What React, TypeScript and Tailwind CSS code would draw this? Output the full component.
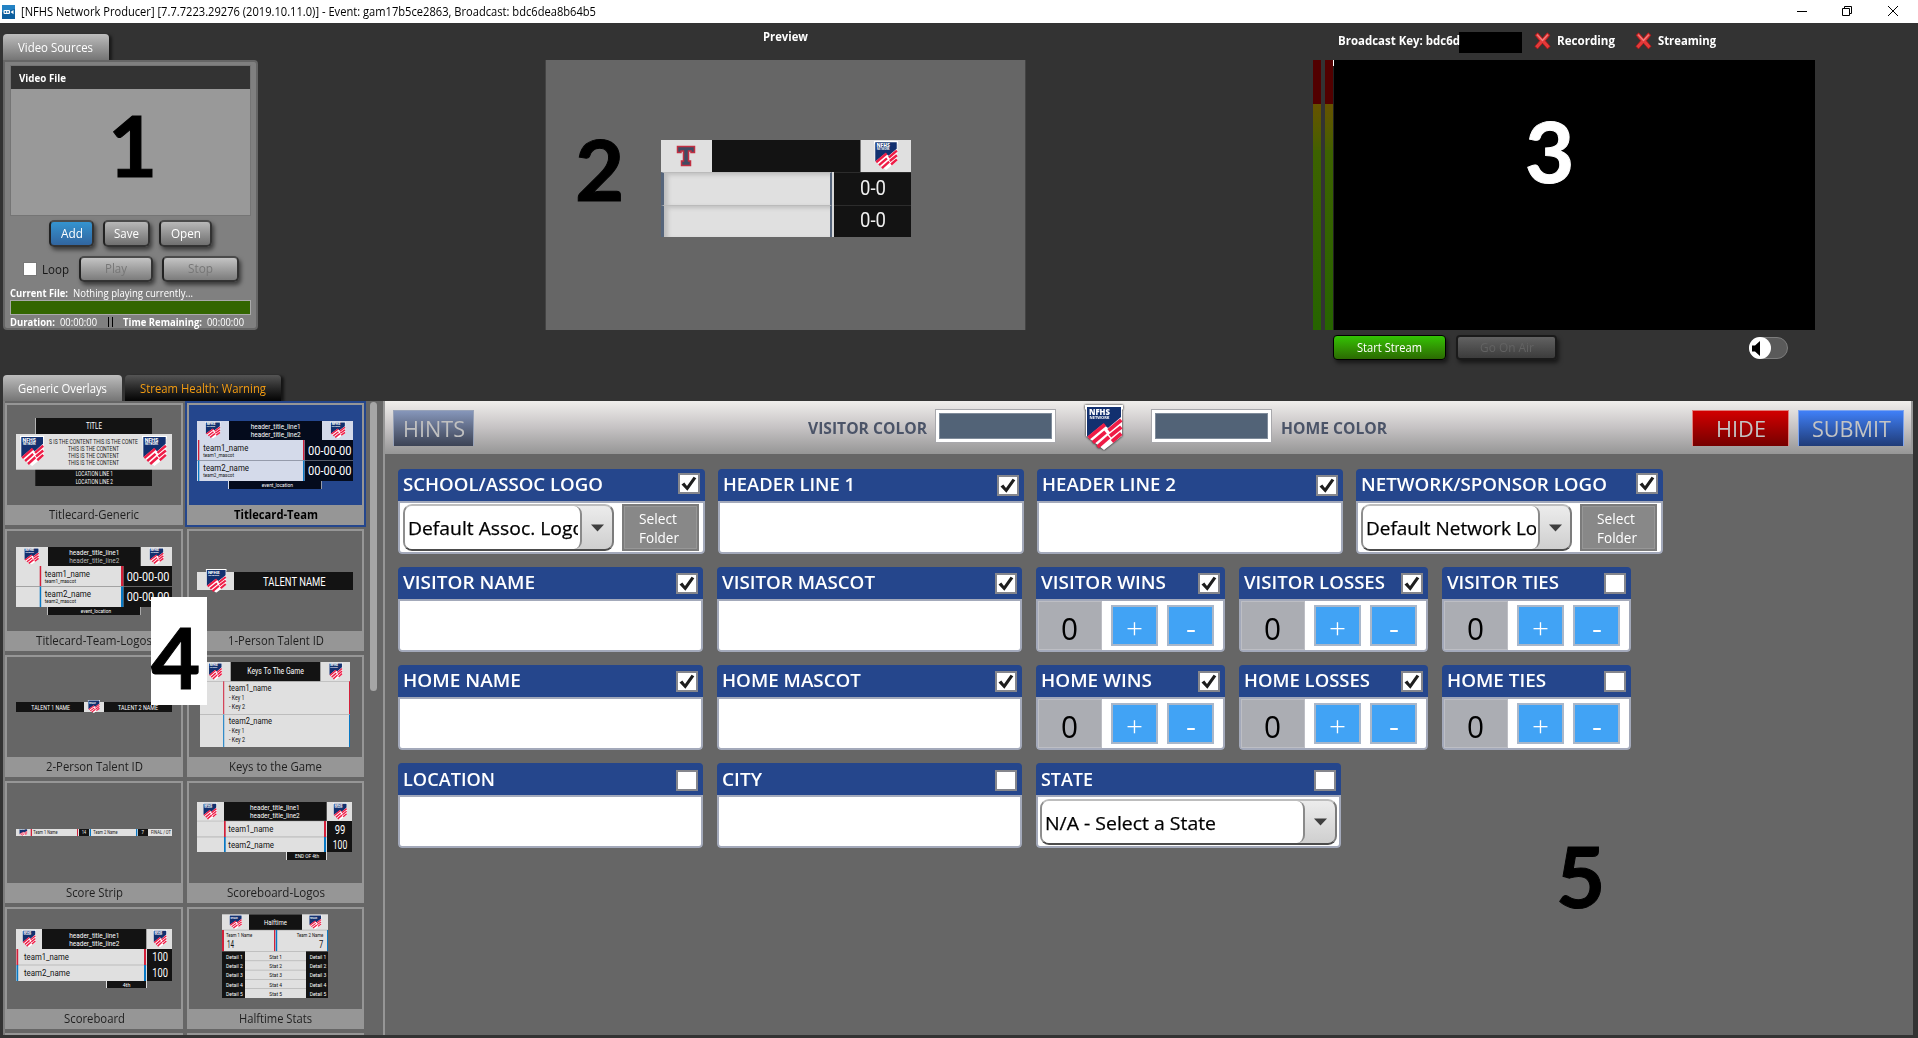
import { useLayoutEffect, useRef, useState, type ReactNode } from "react";

/* Text squeezed or stretched horizontally so it fills a known width. */
function Fit({ w, className = "", children }: { w: number; className?: string; children: ReactNode }) {
  const ref = useRef<HTMLSpanElement>(null);
  const [scale, setScale] = useState(1);
  useLayoutEffect(() => {
    if (ref.current && ref.current.offsetWidth) {
      const range = document.createRange();
      range.selectNodeContents(ref.current);
      ref.current.style.transform = "none";
      const natural = range.getBoundingClientRect().width;
      ref.current.style.transform = `scaleX(${w / natural})`;
      setScale(w / natural);
    }
  }, [w]);
  return (
    <span className={`block shrink-0 whitespace-pre ${className}`} style={{ width: w }}>
      <span ref={ref} className="inline-block origin-left" style={{ transform: `scaleX(${scale})` }}>
        {children}
      </span>
    </span>
  );
}

function ShieldShape() {
  return (
    <>
      <path d="M0 0H38V4L37 5V31L19 45L1 31V5L0 4Z" fill="#fff" />
      <path d="M2 2H36V12L23 23L18 19L2 32Z" fill="#12306f" />
      <g stroke="#ee1c46" strokeWidth="3.8">
        <path d="M3.500 33L20 19.500" />
        <path d="M8 37.500L20.500 27" />
        <path d="M12.500 42L24 32" />
        <path d="M23.500 25.500L36.300 15" />
        <path d="M25 31L36.300 22" />
        <path d="M27 36.500L36.300 28.500" />
      </g>
      <text x="4" y="9.500" fontSize="8" fontWeight="800" fill="#fff" textLength="21" lengthAdjust="spacingAndGlyphs">NFHS</text>
      <text x="4.500" y="14" fontSize="4" fontWeight="700" fill="#fff" textLength="20" lengthAdjust="spacingAndGlyphs">NETWORK</text>
    </>
  );
}

function Shield({ className }: { className: string }) {
  return (
    <svg className={className} viewBox="0 0 38 45" preserveAspectRatio="none">
      <ShieldShape />
    </svg>
  );
}

/* ---- drawing helpers for the overlay thumbnails ---- */
const INK = "#131313";
const PAPER = "#e0e0e0";
const RED = "#d2203a";
const BLUE = "#0878c4";

function R({ x, y, x2, y2, f }: { x: number; y: number; x2: number; y2: number; f: string }) {
  return <rect x={x} y={y} width={x2 - x} height={y2 - y} fill={f} />;
}
function L({ x, x2, y, s, f = "#fff", children }: { x: number; x2: number; y: number; s: number; f?: string; children: string }) {
  return (
    <text x={x} y={y + s * 0.36} fontSize={s} fill={f} textLength={x2 - x} lengthAdjust="spacingAndGlyphs">
      {children}
    </text>
  );
}
function S({ x, y, x2, y2 }: { x: number; y: number; x2: number; y2: number }) {
  return (
    <svg x={x} y={y} width={x2 - x} height={y2 - y} viewBox="0 0 38 45" preserveAspectRatio="none">
      <ShieldShape />
    </svg>
  );
}
function Thumb({ children }: { children: ReactNode }) {
  return (
    <svg className="block h-[100px] w-[174px] max-w-none font-['Roboto',sans-serif]" viewBox="0 0 174 100">
      {children}
    </svg>
  );
}

const TitleGeneric = () => (
  <Thumb>
    <R x={28.3} y={13} x2={145} y2={81} f={INK} />
    <R x={28} y={13} x2={28.700} y2={29} f="#eee" />
    <R x={9} y={29} x2={165} y2={64.7} f={PAPER} />
    <L x={79} x2={95} y={21} s={8.5}>TITLE</L>
    <L x={42} x2={131} y={36.3} s={6.5} f="#222">S IS THE CONTENT THIS IS THE CONTE</L>
    <L x={61} x2={112} y={43.7} s={6.5} f="#222">THIS IS THE CONTENT</L>
    <L x={61} x2={112} y={50.7} s={6.5} f="#222">THIS IS THE CONTENT</L>
    <L x={61} x2={112} y={57.7} s={6.5} f="#222">THIS IS THE CONTENT</L>
    <L x={68.7} x2={106} y={69} s={6.5}>LOCATION LINE 1</L>
    <L x={68.7} x2={106} y={76.7} s={6.5}>LOCATION LINE 2</L>
    <S x={13} y={30.700} x2={37.3} y2={61} />
    <S x={135} y={30.7} x2={160} y2={61} />
  </Thumb>
);

const TitleTeam = () => {
  const k = "#040b1c";
  const p = "#d4daea";
  return (
    <Thumb>
      <R x={8} y={16} x2={164} y2={35} f={p} />
      <R x={40} y={16} x2={133} y2={35} f={k} />
      <R x={8} y={35} x2={115.7} y2={76} f={p} />
      <R x={115.7} y={35} x2={164} y2={76} f={k} />
      <R x={8} y={55} x2={164} y2={55.700} f="#7a8090" />
      <R x={9} y={35} x2={10.3} y2={55} f={RED} />
      <R x={114} y={35} x2={115.300} y2={55} f={RED} />
      <R x={9} y={55.5} x2={10.3} y2={76} f={BLUE} />
      <R x={114} y={55.5} x2={115.3} y2={76} f={BLUE} />
      <R x={39.5} y={76} x2={133} y2={84} f={k} />
      <R x={39} y={76} x2={40} y2={84} f={p} />
      <R x={132.300} y={76} x2={133} y2={84} f={p} />
      <L x={61.7} x2={111.7} y={21.3} s={8}>header_title_line1</L>
      <L x={61.7} x2={111.7} y={29} s={8}>header_title_line2</L>
      <L x={14.3} x2={59.3} y={42.5} s={9.5} f="#111">team1_name</L>
      <L x={14.3} x2={45} y={50.3} s={5.5} f="#111">team1_mascot</L>
      <L x={14.3} x2={60} y={62.7} s={9.5} f="#111">team2_name</L>
      <L x={14.3} x2={45} y={70.3} s={5.5} f="#111">team2_mascot</L>
      <L x={119} x2={162.5} y={45} s={12.5}>00-00-00</L>
      <L x={119} x2={162.5} y={65.3} s={12.5}>00-00-00</L>
      <L x={72.7} x2={104} y={80.3} s={5.5}>event_location</L>
      <S x={16} y={16.7} x2={31.7} y2={33.5} />
      <S x={141} y={16.7} x2={156.7} y2={33.5} />
    </Thumb>
  );
};

const TitleTeamLogos = () => (
  <Thumb>
    <R x={9} y={16} x2={165} y2={35} f={PAPER} />
    <R x={41} y={16} x2={133.7} y2={35} f={INK} />
    <R x={9} y={35} x2={116.5} y2={76} f={PAPER} />
    <R x={116.5} y={35} x2={165} y2={76} f={INK} />
    <R x={9} y={55} x2={165} y2={55.7} f="#888" />
    <R x={32.700} y={35} x2={34.2} y2={55} f={RED} />
    <R x={114} y={35} x2={116.3} y2={55} f={RED} />
    <R x={32.7} y={55.5} x2={34.2} y2={76} f={BLUE} />
    <R x={114} y={55.5} x2={116.3} y2={76} f={BLUE} />
    <R x={40.3} y={76} x2={133.7} y2={84} f={INK} />
    <R x={40} y={76} x2={40.8} y2={84} f={PAPER} />
    <R x={133} y={76} x2={133.7} y2={84} f={PAPER} />
    <L x={62.3} x2={112.3} y={21.3} s={8}>header_title_line1</L>
    <L x={62.3} x2={112.3} y={29} s={8} f="#bbb">header_title_line2</L>
    <L x={37.7} x2={83} y={42.5} s={9.5} f="#111">team1_name</L>
    <L x={37.7} x2={69} y={50.3} s={5.5} f="#111">team1_mascot</L>
    <L x={37.7} x2={84} y={62.7} s={9.5} f="#111">team2_name</L>
    <L x={37.7} x2={69} y={70.3} s={5.5} f="#111">team2_mascot</L>
    <L x={119.7} x2={162.5} y={45} s={12.5}>00-00-00</L>
    <L x={119.7} x2={162.5} y={65.3} s={12.5}>00-00-00</L>
    <L x={73.7} x2={104} y={80.3} s={5.5}>event_location</L>
    <S x={16.7} y={16.7} x2={32.3} y2={33.5} />
    <S x={142} y={16.7} x2={157} y2={33.5} />
  </Thumb>
);

const TalentOne = () => (
  <Thumb>
    <R x={8} y={41} x2={45} y2={59} f={PAPER} />
    <R x={45} y={41} x2={164} y2={59} f={INK} />
    <S x={16.7} y={38} x2={37.7} y2={61.7} />
    <L x={74} x2={136.7} y={50.5} s={12.5}>TALENT NAME</L>
  </Thumb>
);

const TalentTwo = () => (
  <Thumb>
    <R x={9} y={45} x2={165} y2={55} f={INK} />
    <R x={77} y={45} x2={97} y2={55} f={PAPER} />
    <S x={80.7} y={43} x2={93} y2={56} />
    <L x={24.3} x2={63} y={50.300} s={7}>TALENT 1 NAME</L>
    <L x={111} x2={151} y={50.3} s={7}>TALENT 2 NAME</L>
  </Thumb>
);

const Keys = () => (
  <Thumb>
    <R x={11} y={5} x2={161} y2={90} f={PAPER} />
    <R x={41.7} y={5} x2={131.3} y2={24.3} f={INK} />
    <R x={11} y={24} x2={161} y2={24.7} f="#b5b5b5" />
    <R x={11} y={57} x2={161} y2={57.800} f="#b5b5b5" />
    <R x={34.200} y={24.300} x2={35.2} y2={57} f={RED} />
    <R x={160} y={24.3} x2={161} y2={57} f={RED} />
    <R x={34.2} y={57.6} x2={35.2} y2={90} f={BLUE} />
    <R x={160} y={57.6} x2={161} y2={90} f={BLUE} />
    <L x={58.3} x2={115} y={14} s={9}>Keys To The Game</L>
    <L x={39.7} x2={82.3} y={30.700} s={9} f="#111">team1_name</L>
    <L x={40} x2={55.3} y={40.7} s={6.5} f="#111">- Key 1</L>
    <L x={40} x2={56} y={50} s={6.5} f="#111">- Key 2</L>
    <L x={39.7} x2={83} y={63.7} s={9} f="#111">team2_name</L>
    <L x={40} x2={55.3} y={74} s={6.5} f="#111">- Key 1</L>
    <L x={40} x2={56} y={82.7} s={6.5} f="#111">- Key 2</L>
    <S x={19.3} y={5.7} x2={33.3} y2={23} />
    <S x={139.7} y={5.7} x2={153.7} y2={23} />
  </Thumb>
);

const ScoreStrip = () => (
  <Thumb>
    <R x={9} y={46} x2={165} y2={53} f={PAPER} />
    <S x={12} y={46} x2={20.7} y2={53} />
    <R x={23.700} y={46} x2={25} y2={53} f={RED} />
    <R x={70} y={46} x2={71} y2={53} f={RED} />
    <R x={72} y={46} x2={82} y2={53} f={INK} />
    <R x={82.700} y={46} x2={84} y2={53} f={BLUE} />
    <R x={129} y={46} x2={130.3} y2={53} f={BLUE} />
    <R x={131} y={46} x2={141} y2={53} f={INK} />
    <L x={26.3} x2={50.5} y={49.5} s={5} f="#222">Team 1 Name</L>
    <L x={75} x2={79} y={49.5} s={5.5}>14</L>
    <L x={86.3} x2={110.5} y={49.5} s={5} f="#222">Team 2 Name</L>
    <L x={134.500} x2={137} y={49.5} s={5.5}>7</L>
    <L x={144} x2={164} y={49.5} s={5} f="#222">FINAL / OT</L>
  </Thumb>
);

const ScoreLogos = () => (
  <Thumb>
    <R x={8} y={19} x2={163} y2={69} f={PAPER} />
    <R x={35} y={19} x2={137.7} y2={38} f={INK} />
    <R x={138} y={38} x2={163} y2={69} f={INK} />
    <R x={8} y={37.8} x2={137.7} y2={38.3} f="#aaa" />
    <R x={8} y={53.600} x2={138} y2={54.3} f="#a5a5a5" />
    <R x={35} y={38} x2={36.7} y2={54} f={RED} />
    <R x={135} y={38} x2={137} y2={54} f={RED} />
    <R x={35} y={54} x2={36.7} y2={69} f={BLUE} />
    <R x={135} y={54} x2={137} y2={69} f={BLUE} />
    <R x={97.3} y={69} x2={138} y2={77} f={INK} />
    <R x={97} y={69} x2={98} y2={77} f={PAPER} />
    <R x={137} y={69} x2={138} y2={77} f={PAPER} />
    <L x={61} x2={110.7} y={24.3} s={8}>header_title_line1</L>
    <L x={61} x2={110.7} y={32} s={8}>header_title_line2</L>
    <L x={39.3} x2={84.3} y={46} s={9.5} f="#111">team1_name</L>
    <L x={39.3} x2={85} y={61.700} s={9.5} f="#111">team2_name</L>
    <L x={145.7} x2={156.3} y={46.3} s={12}>99</L>
    <L x={143.7} x2={158.3} y={61.700} s={12}>100</L>
    <L x={106} x2={130} y={73.3} s={6}>END OF 4th</L>
    <S x={13.7} y={20} x2={28} y2={37} />
    <S x={144} y={20} x2={158.3} y2={37} />
  </Thumb>
);

const Score = () => (
  <Thumb>
    <R x={9} y={20} x2={165} y2={72} f={PAPER} />
    <R x={35} y={20} x2={139.3} y2={40} f={INK} />
    <R x={140} y={40} x2={165} y2={72} f={INK} />
    <R x={9} y={55.700} x2={140} y2={56.3} f="#a5a5a5" />
    <R x={9.500} y={40} x2={11.2} y2={56} f={RED} />
    <R x={137} y={40} x2={139} y2={56} f={RED} />
    <R x={9.5} y={56} x2={11.2} y2={72} f={BLUE} />
    <R x={137} y={56} x2={139} y2={72} f={BLUE} />
    <R x={99} y={72} x2={139.7} y2={79} f={INK} />
    <R x={99} y={72} x2={100} y2={79} f={PAPER} />
    <R x={139} y={72} x2={140} y2={79} f={PAPER} />
    <L x={62.3} x2={112.3} y={26} s={8}>header_title_line1</L>
    <L x={62.3} x2={112.3} y={34} s={8}>header_title_line2</L>
    <L x={17} x2={62} y={48} s={9.5} f="#111">team1_name</L>
    <L x={17} x2={63} y={64} s={9.5} f="#111">team2_name</L>
    <L x={145.3} x2={161} y={48} s={12}>100</L>
    <L x={145.3} x2={161} y={64} s={12}>100</L>
    <L x={115.7} x2={123.3} y={75.7} s={5.5}>4th</L>
    <S x={15} y={21} x2={29} y2={38.3} />
    <S x={146} y={21} x2={160} y2={38.3} />
  </Thumb>
);

const Halftime = () => (
  <Thumb>
    <R x={33} y={5.3} x2={139} y2={89} f={PAPER} />
    <R x={60} y={5.3} x2={113} y2={21} f={INK} />
    <R x={33} y={20.800} x2={139} y2={21.3} f="#999" />
    <R x={33} y={21} x2={35} y2={42.300} f={RED} />
    <R x={85} y={21} x2={86.3} y2={42.3} f={RED} />
    <R x={86.800} y={21} x2={88.200} y2={42.3} f={BLUE} />
    <R x={138} y={21} x2={139} y2={42.3} f={BLUE} />
    <R x={33} y={42.3} x2={56} y2={89} f={INK} />
    <R x={117} y={42.3} x2={139} y2={89} f={INK} />
    <L x={75} x2={98} y={12.7} s={8}>Halftime</L>
    <L x={37} x2={63.3} y={26.3} s={5.5} f="#111">Team 1 Name</L>
    <L x={38} x2={45} y={35.2} s={10} f="#111">14</L>
    <L x={107.7} x2={134.3} y={26.3} s={5.5} f="#111">Team 2 Name</L>
    <L x={130} x2={134.3} y={35.2} s={10} f="#111">7</L>
    {[1, 2, 3, 4, 5].map((n) => (
      <g key={n}>
        <R x={56} y={32.9 + n * 9.3} x2={117} y2={33.5 + n * 9.3} f="#aaa" />
        <L x={37} x2={53.7} y={38.2 + n * 9.3} s={6}>{`Detail ${n}`}</L>
        <L x={80.3} x2={93} y={38.2 + n * 9.3} s={6} f="#111">{`Stat ${n}`}</L>
        <L x={120.7} x2={137.3} y={38.2 + n * 9.3} s={6}>{`Detail ${n}`}</L>
      </g>
    ))}
    <S x={40} y={6} x2={53.3} y2={20} />
    <S x={119.7} y={6} x2={132.7} y2={20} />
  </Thumb>
);

function Card({ label, w, active = false, children }: { label: string; w: number; active?: boolean; children: ReactNode }) {
  return (
    <div
      className={`flex h-[122px] w-full flex-col border-2 border-[#969696] bg-[#969696] ${
        active ? "outline-2 outline-[#24468d]" : ""
      }`}
    >
      <div className={`h-[100px] shrink-0 overflow-hidden ${active ? "bg-[#24468d]" : "bg-[#666]"}`}>{children}</div>
      <div className="flex justify-center pt-px">
        <Fit w={w} className={`text-[12.500px] leading-[18px] ${active ? "font-bold text-black" : "text-[#1f1f1f]"}`}>
          {label}
        </Fit>
      </div>
    </div>
  );
}

/* ---- form pieces ---- */
function Check({ on, className = "" }: { on: boolean; className?: string }) {
  return (
    <span className={`flex h-[21px] w-[22px] items-center justify-center border-2 border-[#85868c] bg-white ${className}`}>
      {on && (
        <svg className="h-[17px] w-[18px]" viewBox="0 0 18 17" fill="none">
          <path d="M1.500 9.500L4.300 7.500L7 11L13.600 1.800L16.300 3.300L7.400 15.800Z" fill="#1e1e1e" />
        </svg>
      )}
    </span>
  );
}

type FieldProps = { label: string; tw: number; on: boolean; size: string; high?: boolean; low?: boolean; children?: ReactNode };

function Field({ label, tw, on, size, high, low, children }: FieldProps) {
  return (
    <div className={`flex h-[85px] shrink-0 flex-col overflow-hidden rounded-[4px] ${size}`}>
      <div className="flex h-[32px] items-start justify-between bg-[#25468c] pl-[5px] pr-[5px]">
        <Fit w={tw} className={`text-[18px] font-semibold leading-[26px] text-white ${low ? "pt-[3px]" : "pt-[2px]"}`}>{label}</Fit>
        <Check on={on} className={high ? "mt-[4px]" : low ? "mt-[7px]" : "mt-[6px]"} />
      </div>
      <div className="flex h-[53px] items-start rounded-b-[4px] border-2 border-[#a3a9ba] bg-white">{children}</div>
    </div>
  );
}

function Combo({ text, tw, box, inner }: { text: string; tw: number; box: string; inner: string }) {
  return (
    <div
      className={`flex shrink-0 items-stretch overflow-hidden rounded-[9px] border-2 border-t-[#bdbdbd] border-r-[#7c7c7c] border-b-[#4c4c4c] border-l-[#8e8e8e] bg-gradient-to-b from-[#ececec] to-[#cfcfcf] ${box}`}
    >
      <div className={`flex items-center overflow-hidden rounded-r-[8px] border-r-2 border-[#8a8a8a] bg-white pl-[3px] pt-px ${inner}`}>
        <div className="overflow-hidden">
          <Fit w={tw} className="text-[18.500px] font-medium leading-[28px] text-black [-webkit-text-stroke:0.25px_#000]">{text}</Fit>
        </div>
      </div>
      <div className="flex flex-1 items-center justify-center">
        <svg className="h-[8px] w-[13px]" viewBox="0 0 13 8"><path d="M0 0.500H13L6.500 7.500Z" fill="#3f3f3f" /></svg>
      </div>
    </div>
  );
}

function LogoPicker({ text, tw }: { text: string; tw: number }) {
  return (
    <div className="flex pl-[3px] pt-px">
      <Combo text={text} tw={tw} box="h-[47px] w-[211px]" inner="w-[177px] pr-[2px]" />
      <div className="ml-[8px] flex h-[47px] w-[77px] flex-col items-start justify-center border-2 border-[#7b7b7b] bg-[#888] pl-[15px] pt-px text-[14px] leading-[19px] text-white outline-1 -outline-offset-3 outline-[#979797]">
        <Fit w={38}>Select</Fit>
        <Fit w={40}>Folder</Fit>
      </div>
    </div>
  );
}

function Counter() {
  return (
    <div className="flex items-center">
      <div className="flex h-[49px] w-[64px] items-center justify-center border border-[#bdbec4] bg-[#abadb3] pr-px pt-[5px]">
        <Fit w={17} className="text-[31px] leading-[40px] text-black">0</Fit>
      </div>
      <div className="ml-[9px] flex h-[41px] w-[47px] items-center justify-center border-2 border-[#a9b7ca] bg-[#41a3f5] pt-[4px] text-[27px] font-light leading-none text-white">
        <Fit w={17}>+</Fit>
      </div>
      <div className="ml-[9px] flex h-[41px] w-[47px] items-center justify-center border-2 border-[#a9b7ca] bg-[#41a3f5] pt-[4px] text-[27px] leading-none text-white">
        <Fit w={10}>-</Fit>
      </div>
    </div>
  );
}

function GrayButton({ label, w, size, tone }: { label: string; w: number; size: string; tone: string }) {
  return (
    <button
      className={`flex items-center justify-center rounded-[5px] border-2 border-t-[#4b4b4b] border-r-[#333] border-b-[#333] border-l-[#222] bg-gradient-to-b shadow-[2px_3px_4px_rgba(0,0,0,0.55)] ${size} ${tone}`}
    >
      <Fit w={w} className="text-[12.500px] leading-[18px]">{label}</Fit>
    </button>
  );
}

function StatusX() {
  return (
    <svg className="h-[18px] w-[17px]" viewBox="0 0 16 17">
      <path d="M1 3L3.500 0.800L8 6L12.500 0.800L15 3L10.700 8.300L15.200 13.500L12.700 16L8 10.600L3.300 16L0.800 13.500L5.300 8.300Z" fill="#e23a3a" stroke="#a81818" strokeWidth="0.8" />
      <path d="M3 2.500L8 8L13 2.500" fill="none" stroke="#f28080" strokeWidth="1.200" />
    </svg>
  );
}

function Meter() {
  return (
    <div className="flex h-[270px] w-[8px] flex-col">
      <div className="h-[44px] bg-[#520000]" />
      <div className="h-[46px] bg-gradient-to-b from-[#665200] to-[#446000]" />
      <div className="flex-1 bg-gradient-to-b from-[#3d6200] to-[#266400]" />
    </div>
  );
}

function TitleBar() {
  return (
    <header className="flex h-[23px] shrink-0 items-center bg-white">
      <svg className="ml-[2px] h-[14px] w-[13px]" viewBox="0 0 13 14">
        <rect width="13" height="14" fill="#0d5f9e" />
        <path d="M0 0H13V4L0 7Z" fill="#2382c4" />
        <rect x="1.500" y="5" width="6.500" height="4" rx="1" fill="#fff" />
        <path d="M8.500 7L11.500 5V9.300Z" fill="#fff" />
        <circle cx="3.400" cy="7" r="0.900" fill="#0d5f9e" />
        <circle cx="6" cy="7" r="0.900" fill="#0d5f9e" />
      </svg>
      <Fit w={575} className="ml-[6px] text-[12px] leading-[20px] text-black">
        [NFHS Network Producer] [7.7.7223.29276 (2019.10.11.0)] - Event: gam17b5ce2863, Broadcast: bdc6dea8b64b5
      </Fit>
      <svg className="ml-auto mr-[19px] h-[12px] w-[103px] -translate-y-px" viewBox="0 0 103 12" fill="none" stroke="#000">
        <path d="M1 6.500H11" />
        <path d="M46.500 3.500H53.500V10.500H46.500ZM48.500 3.500V1.500H55.500V8.500H53.500" />
        <path d="M92 1L102 11M102 1L92 11" />
      </svg>
    </header>
  );
}

function VideoSources() {
  return (
    <div className="ml-[3px] mt-[11px] w-[255px]">
      <div className="flex h-[26px] w-[106px] items-center justify-center rounded-t-[4px] bg-gradient-to-b from-[#bdbdbd] to-[#757575] pt-[2px] pr-px shadow-[3px_1px_3px_rgba(0,0,0,0.5)]">
        <Fit w={75} className="text-[12.500px] leading-[20px] text-white">Video Sources</Fit>
      </div>
      <div className="h-[270px] w-[255px] rounded-[4px] rounded-tl-none border-2 border-[#666] bg-[#808080] pl-[5px] pt-[3px]">
        <div className="w-[241px] border border-[#757575]">
          <div className="flex h-[23px] items-center bg-[#333] pl-[8px]">
            <Fit w={47} className="text-[11px] font-bold leading-[18px] text-white">Video File</Fit>
          </div>
          <div className="h-[126px] bg-[#999]" />
        </div>
        <div className="mt-[4px] flex gap-[9px] pl-[39px]">
          <GrayButton label="Add" w={22} size="h-[27px] w-[45px]" tone="from-[#3494d0] to-[#31659f] text-white" />
          <GrayButton label="Save" w={25} size="h-[27px] w-[47px]" tone="from-[#b8b8b8] to-[#707070] text-white" />
          <GrayButton label="Open" w={30} size="h-[27px] w-[53px]" tone="from-[#b8b8b8] to-[#707070] text-white" />
        </div>
        <div className="mt-[9px] flex items-center pl-[13px]">
          <span className="h-[14px] w-[14px] border border-[#777] bg-white" />
          <Fit w={27} className="ml-[5px] text-[13px] leading-[18px] text-[#161616]">Loop</Fit>
          <GrayButton label="Play" w={22} size="ml-[10px] h-[26px] w-[74px]" tone="from-[#c4c4c4] to-[#7c7c7c] text-[#777]" />
          <GrayButton label="Stop" w={25} size="ml-[9px] h-[26px] w-[77px]" tone="from-[#c4c4c4] to-[#7c7c7c] text-[#777]" />
        </div>
        <div className="mt-[4px] flex h-[14px] items-center text-[11px] leading-[14px] text-white">
          <Fit w={58} className="font-bold">Current File:</Fit>
          <Fit w={120} className="ml-[5px]">Nothing playing currently...</Fit>
        </div>
        <div className="h-[15px] w-[241px] border border-[#aaa] bg-[#336600]" />
        <div className="flex h-[14px] items-center text-[11px] leading-[14px] text-white">
          <Fit w={45} className="font-bold">Duration:</Fit>
          <Fit w={37} className="ml-[5px]">00:00:00</Fit>
          <span className="ml-[11px] h-[10px] w-[5px] border-x border-black" />
          <Fit w={79} className="ml-[10px] font-bold">Time Remaining:</Fit>
          <Fit w={37} className="ml-[5px]">00:00:00</Fit>
        </div>
      </div>
    </div>
  );
}

function PreviewBoard() {
  return (
    <div className="flex h-[97px] w-[250px] flex-col bg-[#131313]">
      <div className="flex h-[32px] justify-between">
        <div className="flex w-[51px] items-center justify-center bg-[#e0e0e0] pr-px">
          <svg className="h-[22px] w-[20px]" viewBox="0 0 20 22">
            <path d="M1.500 1.500H18.500V7.500H15V6H12.500V16H14.500V20.500H5.500V16H7.500V6H5V7.500H1.500Z" fill="#414c63" stroke="#c12f42" strokeWidth="1.500" />
          </svg>
        </div>
        <div className="flex w-[51px] justify-center border-l border-[#777] bg-[#e0e0e0] pt-px">
          <Shield className="h-[29px] w-[24px]" />
        </div>
      </div>
      {[0, 1].map((n) => (
        <div key={n} className="flex h-[32.500px]">
          <div className="w-[171px] border-r-2 border-l-[3px] border-t border-[#56657b] border-t-[#bbb] bg-[#e0e0e0] shadow-[inset_4px_2px_4px_rgba(0,0,0,0.15)]" />
          <div className="w-[2px] bg-[#d8d8d8]" />
          <div className="flex flex-1 items-center justify-center border-t border-[#2c2c2c] bg-[#131313] pl-px">
            <Fit w={26} className="-mt-[2px] font-['Roboto',sans-serif] text-[20.500px] leading-[24px] text-[#f0f0f0]">0-0</Fit>
          </div>
        </div>
      ))}
    </div>
  );
}

function Monitor() {
  return (
    <section className="mt-[9px] w-[605px]">
      <div className="flex h-[21px] items-center pl-[25px] text-[12px] font-bold leading-[18px] text-white">
        <Fit w={122} className="-mt-[3px]">Broadcast Key: bdc6d</Fit>
        <span className="-ml-px h-[21px] w-[63px] bg-black" />
        <span className="ml-[12px] -mt-1"><StatusX /></span>
        <Fit w={58} className="ml-[6px] -mt-[3px]">Recording</Fit>
        <span className="ml-[20px] -mt-1"><StatusX /></span>
        <Fit w={58} className="ml-[6px] -mt-[3px]">Streaming</Fit>
      </div>
      <div className="mt-[7px] flex">
        <Meter />
        <span className="w-[4px]" />
        <Meter />
        <div className="h-[270px] w-[482px] border-l border-[#222] bg-black">
          <div className="-ml-px h-[6px] w-px bg-white" />
        </div>
      </div>
      <div className="mt-[5px] flex pl-[20px]">
        <button className="flex h-[25px] w-[113px] items-center justify-center rounded-[4px] border border-black bg-gradient-to-b from-[#33c404] to-[#2b6a02] shadow-[2px_3px_4px_rgba(0,0,0,0.55)]">
          <Fit w={65} className="text-[12px] leading-[18px] text-white">Start Stream</Fit>
        </button>
        <button className="ml-[10px] flex h-[25px] w-[101px] items-center justify-center rounded-[4px] border-2 border-[#1a1a1a] bg-gradient-to-b from-[#626262] to-[#3c3c3c] shadow-[2px_3px_4px_rgba(0,0,0,0.55)]">
          <Fit w={54} className="text-[12.500px] leading-[18px] text-[#626262]">Go On Air</Fit>
        </button>
        <div className="ml-[192px] mt-[2px] flex h-[22px] w-[39px] rounded-full border border-[#7d7d7d] bg-[#5a5a5a]">
          <span className="-ml-px -mt-px flex h-[22px] w-[22px] items-center rounded-full bg-white pl-[3px]">
            <svg className="h-[15px] w-[8px]" viewBox="0 0 8 15"><path d="M0 4.500H3L8 0V15L3 10.500H0Z" fill="#000" /></svg>
          </span>
        </div>
      </div>
    </section>
  );
}

function ColorBox() {
  return (
    <div className="h-[34px] w-[121px] border border-[#a8a8ac] bg-white p-[3px]">
      <div className="h-full border border-[#7f8b9a] bg-[#526377]" />
    </div>
  );
}

function Callout({ n, place, tone = "text-black" }: { n: string; place: string; tone?: string }) {
  return (
    <span
      className={`pointer-events-none absolute font-['Lato',sans-serif] text-[85px] font-bold leading-[104px] [-webkit-text-stroke:1px_currentColor] ${place} ${tone}`}
    >
      {n}
    </span>
  );
}

export default function App() {
  return (
    <div className="relative flex h-[1038px] w-[1918px] flex-col overflow-hidden bg-[#333] font-['Open_Sans',sans-serif]">
      <TitleBar />
      <div className="flex h-[378px] shrink-0">
        <div className="flex w-[545px] flex-col justify-between">
          <VideoSources />
          <div className="ml-[3px] flex h-[26px] gap-[3px]">
            <div className="flex w-[119px] items-center justify-center rounded-t-[4px] bg-gradient-to-b from-[#bdbdbd] to-[#757575] pt-px pr-px">
              <Fit w={89} className="text-[12.500px] leading-[20px] text-white">Generic Overlays</Fit>
            </div>
            <div className="flex w-[156px] items-center justify-center rounded-t-[4px] bg-gradient-to-b from-[#555] to-[#050505] pt-px pr-px shadow-[3px_1px_3px_rgba(0,0,0,0.6)]">
              <Fit w={126} className="text-[12.500px] leading-[20px] text-[#f39c12]">Stream Health: Warning</Fit>
            </div>
          </div>
        </div>
        <section className="flex w-[481px] flex-col items-center">
          <div className="flex h-[37px] items-center pb-[9px]">
            <Fit w={45} className="text-[12px] font-bold leading-[18px] text-white">Preview</Fit>
          </div>
          <div className="flex h-[270px] w-[481px] border-x border-[#444] bg-[#666] pl-[115px] pt-[80px]">
            <PreviewBoard />
          </div>
        </section>
        <div className="ml-[287px]">
          <Monitor />
        </div>
      </div>

      <div className="flex h-[634px] shrink-0 pl-[3px]">
        <aside className="flex w-[380px] overflow-hidden border-l-2 border-[#7c7c7c] bg-[#666]">
          <div className="grid h-fit shrink-0 grid-cols-[178px_177px] gap-[4px] pt-[2px]">
            <Card label="Titlecard-Generic" w={90}><TitleGeneric /></Card>
            <Card label="Titlecard-Team" w={84} active><TitleTeam /></Card>
            <Card label="Titlecard-Team-Logos" w={116}><TitleTeamLogos /></Card>
            <Card label="1-Person Talent ID" w={96}><TalentOne /></Card>
            <Card label="2-Person Talent ID" w={97}><TalentTwo /></Card>
            <Card label="Keys to the Game" w={93}><Keys /></Card>
            <Card label="Score Strip" w={57}><ScoreStrip /></Card>
            <Card label="Scoreboard-Logos" w={98}><ScoreLogos /></Card>
            <Card label="Scoreboard" w={61}><Score /></Card>
            <Card label="Halftime Stats" w={73}><Halftime /></Card>
            <div className="h-[2px] bg-[#969696]" />
            <div className="h-[2px] bg-[#969696]" />
          </div>
          <div className="ml-[6px] mt-px h-[289px] w-[7px] rounded-full bg-[#a6a6a6]" />
        </aside>

        <main className="w-[1530px] border-l-2 border-[#969696] bg-[#666]">
          <div className="flex h-[53px] items-center border-r-2 border-[#999] bg-gradient-to-b from-[#f0eeec] via-[#c6c3c4] to-[#969696]">
            <div className="ml-[8px] flex h-[36px] w-[81px] items-center justify-center border border-b-0 border-[#97a2b8] bg-gradient-to-b from-[#8696ba] to-[#3c4355]">
              <Fit w={62} className="text-[22px] leading-[34px] text-[#c0c0c0]">HINTS</Fit>
            </div>
            <Fit w={119} className="ml-[334px] text-[16px] font-bold leading-[24px] text-[#4b5468]">VISITOR COLOR</Fit>
            <span className="-mt-[3px] ml-[8px]"><ColorBox /></span>
            <Shield className="-mt-px ml-[29px] h-[45px] w-[38px] drop-shadow-[0_0_1px_#000]" />
            <span className="-mt-[3px] ml-[28px]"><ColorBox /></span>
            <Fit w={106} className="ml-[9px] text-[16px] font-bold leading-[24px] text-[#4b5468]">HOME COLOR</Fit>
            <div className="ml-[305px] flex h-[36px] w-[97px] items-center justify-center border border-b-0 border-[#e0807c] bg-gradient-to-b from-[#d20000] to-[#760000]">
              <Fit w={50} className="text-[22px] leading-[34px] text-[#c4c4c4]">HIDE</Fit>
            </div>
            <div className="ml-[9px] flex h-[36px] w-[106px] items-center justify-center border border-b-0 border-[#7ea4ee] bg-gradient-to-b from-[#4080f8] to-[#203c78]">
              <Fit w={79} className="text-[22px] leading-[34px] text-[#c4c4c4]">SUBMIT</Fit>
            </div>
          </div>
          <div className="flex flex-col gap-[13px] pl-[13px] pt-[15px]">
            <div className="flex gap-[13px]">
              <Field label="SCHOOL/ASSOC LOGO" tw={200} on size="w-[307px]" high>
                <LogoPicker text="Default Assoc. Logo" tw={176} />
              </Field>
              <Field label="HEADER LINE 1" tw={132} on size="w-[306px]" />
              <Field label="HEADER LINE 2" tw={134} on size="w-[306px]" />
              <Field label="NETWORK/SPONSOR LOGO" tw={246} on size="w-[307px]" high>
                <LogoPicker text="Default Network Logo" tw={193} />
              </Field>
            </div>
            <div className="flex gap-[14px]">
              <Field label="VISITOR NAME" tw={132} on size="w-[305px]" />
              <Field label="VISITOR MASCOT" tw={153} on size="w-[305px]" />
              <Field label="VISITOR WINS" tw={125} on size="w-[189px]"><Counter /></Field>
              <Field label="VISITOR LOSSES" tw={141} on size="w-[189px]"><Counter /></Field>
              <Field label="VISITOR TIES" tw={112} on={false} size="w-[189px]"><Counter /></Field>
            </div>
            <div className="flex gap-[14px]">
              <Field label="HOME NAME" tw={118} on size="w-[305px]" />
              <Field label="HOME MASCOT" tw={139} on size="w-[305px]" />
              <Field label="HOME WINS" tw={111} on size="w-[189px]"><Counter /></Field>
              <Field label="HOME LOSSES" tw={126} on size="w-[189px]"><Counter /></Field>
              <Field label="HOME TIES" tw={99} on={false} size="w-[189px]"><Counter /></Field>
            </div>
            <div className="flex gap-[14px]">
              <Field label="LOCATION" tw={92} on={false} size="w-[305px]" low />
              <Field label="CITY" tw={40} on={false} size="w-[305px]" low />
              <Field label="STATE" tw={52} on={false} size="w-[305px]" low>
                <div className="pl-[2px] pt-[2px]">
                  <Combo text="N/A - Select a State" tw={171} box="h-[46px] w-[297px]" inner="w-[263px]" />
                </div>
              </Field>
            </div>
          </div>
        </main>
      </div>

      <Callout n="1" place="left-[108px] top-[92px]" />
      <Callout n="2" place="left-[575px] top-[116px]" />
      <Callout n="3" place="left-[1525px] top-[98px]" tone="text-white" />
      <div className="absolute left-[151px] top-[597px] h-[108px] w-[56px] bg-white">
        <Callout n="4" place="left-0 top-[7px]" />
      </div>
      <Callout n="5" place="left-[1556px] top-[823px]" />
    </div>
  );
}
